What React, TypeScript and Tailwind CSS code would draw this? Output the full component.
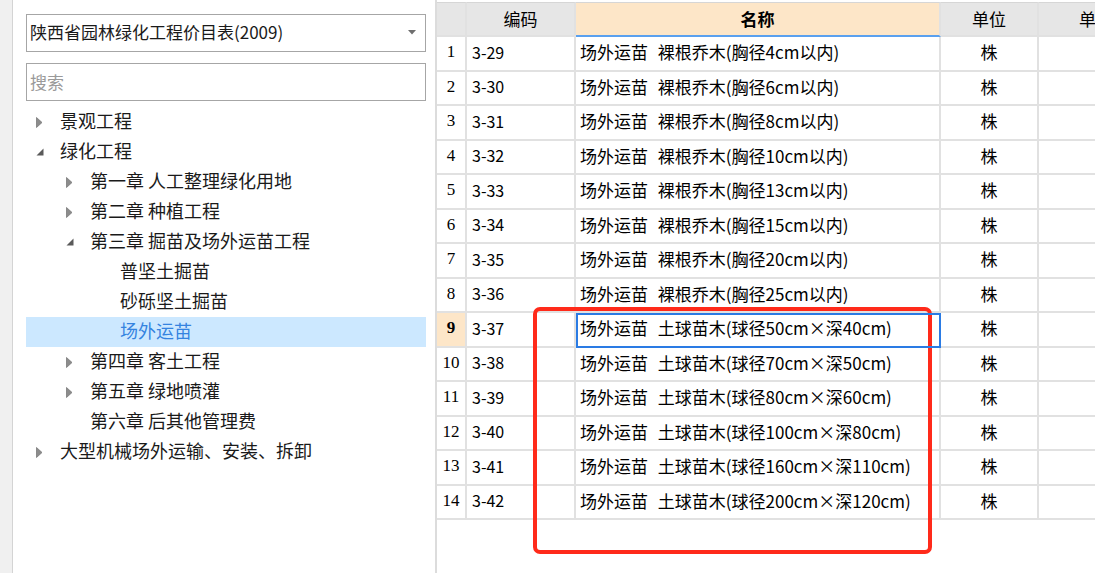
import React from 'react';

type TreeNode = {
  label: string;
  level: number;
  arrow?: 'closed' | 'open';
  selected?: boolean;
};

const treeNodes: TreeNode[] = [
  { label: '景观工程', level: 0, arrow: 'closed' },
  { label: '绿化工程', level: 0, arrow: 'open' },
  { label: '第一章 人工整理绿化用地', level: 1, arrow: 'closed' },
  { label: '第二章 种植工程', level: 1, arrow: 'closed' },
  { label: '第三章 掘苗及场外运苗工程', level: 1, arrow: 'open' },
  { label: '普坚土掘苗', level: 2 },
  { label: '砂砾坚土掘苗', level: 2 },
  { label: '场外运苗', level: 2, selected: true },
  { label: '第四章 客土工程', level: 1, arrow: 'closed' },
  { label: '第五章 绿地喷灌', level: 1, arrow: 'closed' },
  { label: '第六章 后其他管理费', level: 1 },
  { label: '大型机械场外运输、安装、拆卸', level: 0, arrow: 'closed' },
];

const rows = [
  { code: '3-29', name: '场外运苗 裸根乔木(胸径4cm以内)' },
  { code: '3-30', name: '场外运苗 裸根乔木(胸径6cm以内)' },
  { code: '3-31', name: '场外运苗 裸根乔木(胸径8cm以内)' },
  { code: '3-32', name: '场外运苗 裸根乔木(胸径10cm以内)' },
  { code: '3-33', name: '场外运苗 裸根乔木(胸径13cm以内)' },
  { code: '3-34', name: '场外运苗 裸根乔木(胸径15cm以内)' },
  { code: '3-35', name: '场外运苗 裸根乔木(胸径20cm以内)' },
  { code: '3-36', name: '场外运苗 裸根乔木(胸径25cm以内)' },
  { code: '3-37', name: '场外运苗 土球苗木(球径50cm×深40cm)' },
  { code: '3-38', name: '场外运苗 土球苗木(球径70cm×深50cm)' },
  { code: '3-39', name: '场外运苗 土球苗木(球径80cm×深60cm)' },
  { code: '3-40', name: '场外运苗 土球苗木(球径100cm×深80cm)' },
  { code: '3-41', name: '场外运苗 土球苗木(球径160cm×深110cm)' },
  { code: '3-42', name: '场外运苗 土球苗木(球径200cm×深120cm)' },
];

const ACTIVE_ROW = 8;

function TreeArrow({ kind }: { kind?: 'closed' | 'open' }) {
  if (kind === 'closed') {
    return (
      <svg width="7" height="11" viewBox="0 0 7 11">
        <polygon points="0.5,0.5 6,5.5 0.5,10.5" fill="#8c8c8c" stroke="#7a7a7a" strokeWidth="0.8" />
      </svg>
    );
  }
  if (kind === 'open') {
    return (
      <svg width="8" height="8" viewBox="0 0 8 8">
        <polygon points="7.5,0.5 7.5,7.5 0.5,7.5" fill="#5a5a5a" />
      </svg>
    );
  }
  return null;
}

function LeftPanel() {
  return (
    <div className="flex w-[422px] shrink-0 flex-col bg-white pl-[13px] pr-[9px] pt-[14px]">
      {/* library picker */}
      <div className="flex h-[38px] items-center justify-between border border-[#a6a6a6] pb-[2px] pl-[3px] pr-[9px] text-[17px] text-[#1a1a1a]">
        <span>陕西省园林绿化工程价目表(2009)</span>
        <svg width="8" height="5" viewBox="0 0 8 5">
          <polygon points="0,0 8,0 4,4.5" fill="#6e6e6e" />
        </svg>
      </div>

      <input
        className="mt-[11px] h-[38px] border border-[#a6a6a6] px-[3px] pb-[2px] text-[17px] outline-none placeholder:text-[#9a9a9a]"
        placeholder="搜索"
      />

      {/* chapter tree */}
      <div className="mt-[6px] flex flex-col">
        {treeNodes.map((node) => (
          <div
            key={node.label}
            className={
              'flex h-[30px] items-center text-[18px] ' +
              (node.selected ? 'bg-[#cce8ff] text-[#3483e0]' : 'text-[#1a1a1a]')
            }
          >
            <div
              className={
                node.level === 0 ? 'w-[10px] shrink-0' : node.level === 1 ? 'w-[40px] shrink-0' : 'w-[70px] shrink-0'
              }
            />
            <div className="flex w-[24px] shrink-0 items-center">
              <TreeArrow kind={node.arrow} />
            </div>
            <span className="whitespace-pre pb-[3px]">{node.label}</span>
          </div>
        ))}
      </div>
    </div>
  );
}

function QuotaTable() {
  const cell = 'flex items-center border-b-2 border-r-2 border-[#e1e1e1]';
  const head = cell + ' h-[35px] border-t border-t-[#d6d6d6] bg-[#e6e6e6]';
  return (
    <div className="min-w-0 flex-1 overflow-hidden border-l-2 border-[#dcdcdc] bg-white pt-[2px]">
      <div className="grid w-[718px] grid-cols-[30px_109px_365px_98px_116px] text-[17px] text-black">
        {/* header */}
        <div className={head} />
        <div className={head + ' justify-center'}>编码</div>
        <div className="flex h-[35px] items-center justify-center border-r-2 border-t border-b-2 border-r-[#e1e1e1] border-t-[#d6d6d6] border-b-[#5aa0ee] bg-[#fde6c8] font-bold">
          名称
        </div>
        <div className={head + ' justify-center'}>单位</div>
        <div className={head + ' pl-[40px]'}>单价</div>

        {rows.map((row, i) => {
          const active = i === ACTIVE_ROW;
          return (
            <React.Fragment key={row.code}>
              <div
                className={
                  cell +
                  ' h-[34.5px] justify-center pb-[3px] font-["Liberation_Serif",serif] ' +
                  (active ? 'bg-[#fde6c8] font-bold' : '')
                }
              >
                {i + 1}
              </div>
              <div className={cell + ' h-[34.5px] pb-[3px] pl-[5px] text-[16px]'}>{row.code}</div>
              <div
                className={
                  cell +
                  ' h-[34.5px] whitespace-pre pb-[3px] pl-[4px] [word-spacing:6px] ' +
                  (active ? 'relative z-10 [outline:2px_solid_#2a7be4] [outline-offset:-2px]' : '')
                }
              >
                {row.name}
              </div>
              <div className={cell + ' h-[34.5px] justify-center pb-[3px]'}>株</div>
              <div className={cell + ' h-[34.5px]'} />
            </React.Fragment>
          );
        })}
      </div>
    </div>
  );
}

export default function App() {
  return (
    <div className="relative flex h-[573px] w-[1095px] overflow-hidden bg-white font-['Noto_Sans_CJK_SC',sans-serif]">
      <div className="w-[13px] shrink-0 border-r border-[#d4d4d4] bg-[#f0f0f0]" />
      <LeftPanel />
      <QuotaTable />

      {/* red annotation box drawn over the grid */}
      <div className="pointer-events-none absolute left-[533px] top-[307px] h-[247px] w-[399px] rounded-[7px] border-4 border-[#ff2a1a]" />
    </div>
  );
}
